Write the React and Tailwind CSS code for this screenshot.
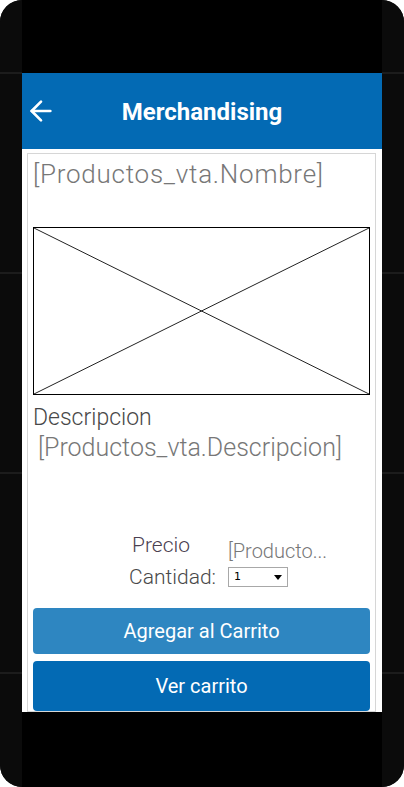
import { ArrowLeft } from "lucide-react";

function SideStrip() {
  return (
    <div className="w-[22px] flex flex-col bg-[#0b0b0b]">
      <div className="h-[72px]"></div>
      <div className="h-[2px] bg-[#1c1c1c]"></div>
      <div className="h-[198px]"></div>
      <div className="h-[2px] bg-[#1c1c1c]"></div>
      <div className="h-[198px]"></div>
      <div className="h-[2px] bg-[#1c1c1c]"></div>
      <div className="h-[198px]"></div>
      <div className="h-[2px] bg-[#1c1c1c]"></div>
    </div>
  );
}

export default function App() {
  return (
    <div className="w-[404px] h-[787px] bg-white font-['Roboto',sans-serif]">
      <div className="w-full h-full rounded-[22px] overflow-hidden bg-[#0b0b0b] flex">
        <SideStrip />
        <div className="w-[360px] flex flex-col bg-black">
          <div className="h-[73px]"></div>
          <header className="h-[76px] bg-[#036ab4] flex items-center relative">
            <ArrowLeft className="absolute left-[3px] top-[22px] text-white" size={32} strokeWidth={2} />
            <h1 className="w-full text-center text-white font-bold text-[24px] leading-none pt-[2px]">Merchandising</h1>
          </header>
          <main className="h-[563px] bg-white pl-[5px] pr-[6px] pt-[4px] overflow-hidden">
            <div className="h-[559px] border border-[#d6d6d6] pl-[5px] overflow-hidden">
              <div className="text-[26px] font-light tracking-[0.75px] text-[#777] leading-[30px] pt-[5px]">[Productos_vta.Nombre]</div>
              <div className="h-[38px]"></div>
              <div className="w-[337px] h-[168px] border border-black">
                <svg width="100%" height="100%" viewBox="0 0 335 166" preserveAspectRatio="none">
                  <line x1="0" y1="0" x2="335" y2="166" stroke="#222" strokeWidth="1" />
                  <line x1="335" y1="0" x2="0" y2="166" stroke="#222" strokeWidth="1" />
                </svg>
              </div>
              <div className="pt-[9px] text-[23px] font-light text-[#484848] leading-[28px]">Descripcion</div>
              <div className="pl-[5px] pt-[1px] text-[25px] font-light text-[#777] leading-[30px]">[Productos_vta.Descripcion]</div>
              <div className="h-[65px]"></div>
              <div className="grid grid-cols-[183px_1fr] gap-x-[12px] gap-y-[4px] items-center">
                <div className="text-[21px] font-light text-[#4a4050] pl-[99px] leading-[22px]">Precio</div>
                <div className="text-[20px] font-light text-[#777] leading-[22px] pt-[12px]">[Producto...</div>
                <div className="text-[21px] font-light text-[#484848] text-right leading-[22px]">Cantidad:</div>
                <div className="w-[60px] h-[20px] border border-[#a8a8a8] flex items-center justify-between px-[5px]">
                  <span className="text-[11px] text-black font-['DejaVu_Sans',sans-serif]">1</span>
                  <svg width="8" height="5" viewBox="0 0 8 5"><path d="M0 0h8L4 5z" fill="#000" /></svg>
                </div>
              </div>
              <button className="mt-[20px] w-[337px] h-[46px] rounded-[4px] bg-[#2e86c1] text-white text-[20px]">Agregar al Carrito</button>
              <button className="mt-[7px] w-[337px] h-[50px] rounded-[4px] bg-[#036ab4] text-white text-[20px]">Ver carrito</button>
            </div>
          </main>
          <div className="flex-1 bg-black"></div>
        </div>
        <SideStrip />
      </div>
    </div>
  );
}
